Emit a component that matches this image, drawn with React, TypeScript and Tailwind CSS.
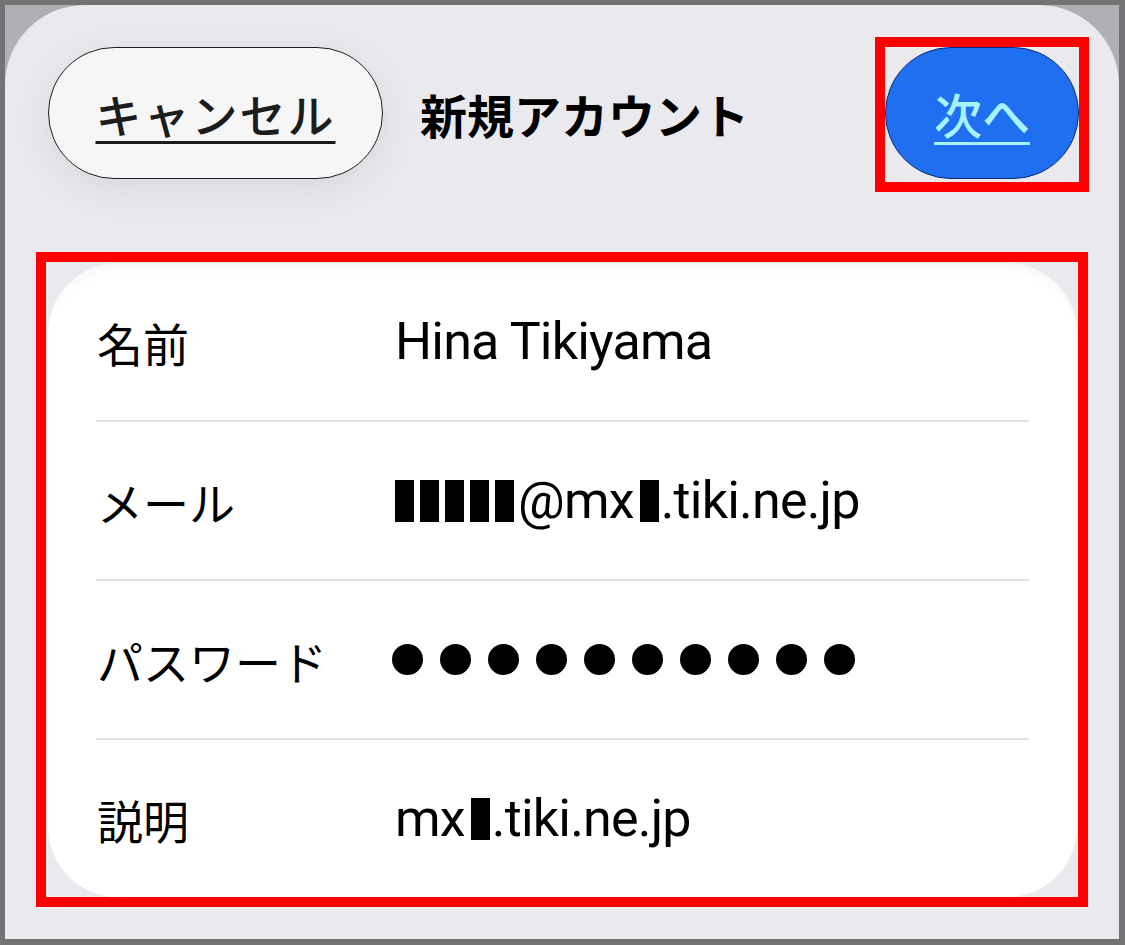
const jp = '"Noto Sans CJK JP", "Noto Sans", sans-serif'
const latin = 'Roboto, "Noto Sans CJK JP", sans-serif'

function Block() {
    return <span className="inline-block w-[19px] h-[42px] bg-black mr-[6px] align-[-4px]" />
}

function Row({label, children}: {label: string, children: React.ReactNode}) {
    return (
        <div className="flex items-center h-[157px] pl-[49px]">
            <div className="w-[298px] text-[46px] leading-none text-black" style={{fontFamily: jp}}>{label}</div>
            <div className="flex items-center text-[52px] leading-none tracking-[-0.8px] text-black" style={{fontFamily: latin}}>
                {children}
            </div>
        </div>
    )
}

function Divider() {
    return <div className="h-[2px] mx-[48px] bg-[#e1e1e3]" />
}

export default function App() {
    return (
        <div className="w-[1125px] h-[945px] bg-[#737373] pt-[5px] pl-[5px] pr-[6px] pb-[6px]">
            <div className="w-full h-full bg-gradient-to-b from-[#aeaeb3] to-[#d4d4d8]">
                <div className="w-full h-full rounded-t-[80px] bg-[#e9e9ee] flex flex-col">
                    {/* header */}
                    <div className="flex items-start pt-[32px] pr-[30px]">
                        <button className="mt-[10px] ml-[43px] w-[335px] h-[132px] rounded-full bg-[#f6f6f6] border border-[#1e1e1e] shadow-[0_10px_40px_rgba(0,0,0,0.08)] flex items-center justify-center">
                            <span className="text-[46px] font-medium leading-none text-[#1c1c1c] underline decoration-[3px] underline-offset-[8px] tracking-[2px]" style={{fontFamily: jp}}>キャンセル</span>
                        </button>
                        <div className="mt-[10px] ml-[37px] h-[132px] flex items-center text-[47px] font-bold leading-none text-black" style={{fontFamily: jp}}>
                            新規アカウント
                        </div>
                        <div className="ml-auto border-[10px] border-[#ff0000] pb-[3px]">
                            <button className="w-[194px] h-[132px] rounded-full bg-[#1f6ff0] border-[1.5px] border-[#0b2a78] flex items-center justify-center">
                                <span className="text-[48px] font-medium leading-none text-[#a6f3ff] underline decoration-[3px] underline-offset-[8px]" style={{fontFamily: jp}}>次へ</span>
                            </button>
                        </div>
                    </div>

                    {/* form card */}
                    <div className="mt-[60px] ml-[31px] w-[1052px] border-[10px] border-[#ff0000] pt-[1px] pl-[2px]">
                        <div className="w-[1029px] rounded-[70px] bg-white flex flex-col shadow-[inset_0_14px_20px_-16px_rgba(0,0,0,0.08)]">
                            <Row label="名前">Hina Tikiyama</Row>
                            <Divider />
                            <Row label="メール">
                                <Block /><Block /><Block /><Block /><Block />
                                <span className="-ml-[2px]">@mx</span>
                                <span className="inline-block w-[19px] h-[42px] bg-black ml-[6px] mr-[2px]" />
                                <span>.tiki.ne.jp</span>
                            </Row>
                            <Divider />
                            <Row label="パスワード">
                                <div className="flex gap-[17px] -ml-[3px]">
                                    {Array.from({length: 10}).map((_, i) => (
                                        <span key={i} className="w-[31px] h-[31px] rounded-full bg-black" />
                                    ))}
                                </div>
                            </Row>
                            <Divider />
                            <Row label="説明">
                                <span>mx</span>
                                <span className="inline-block w-[19px] h-[42px] bg-black ml-[6px] mr-[2px]" />
                                <span>.tiki.ne.jp</span>
                            </Row>
                        </div>
                    </div>
                </div>
            </div>
        </div>
    )
}
